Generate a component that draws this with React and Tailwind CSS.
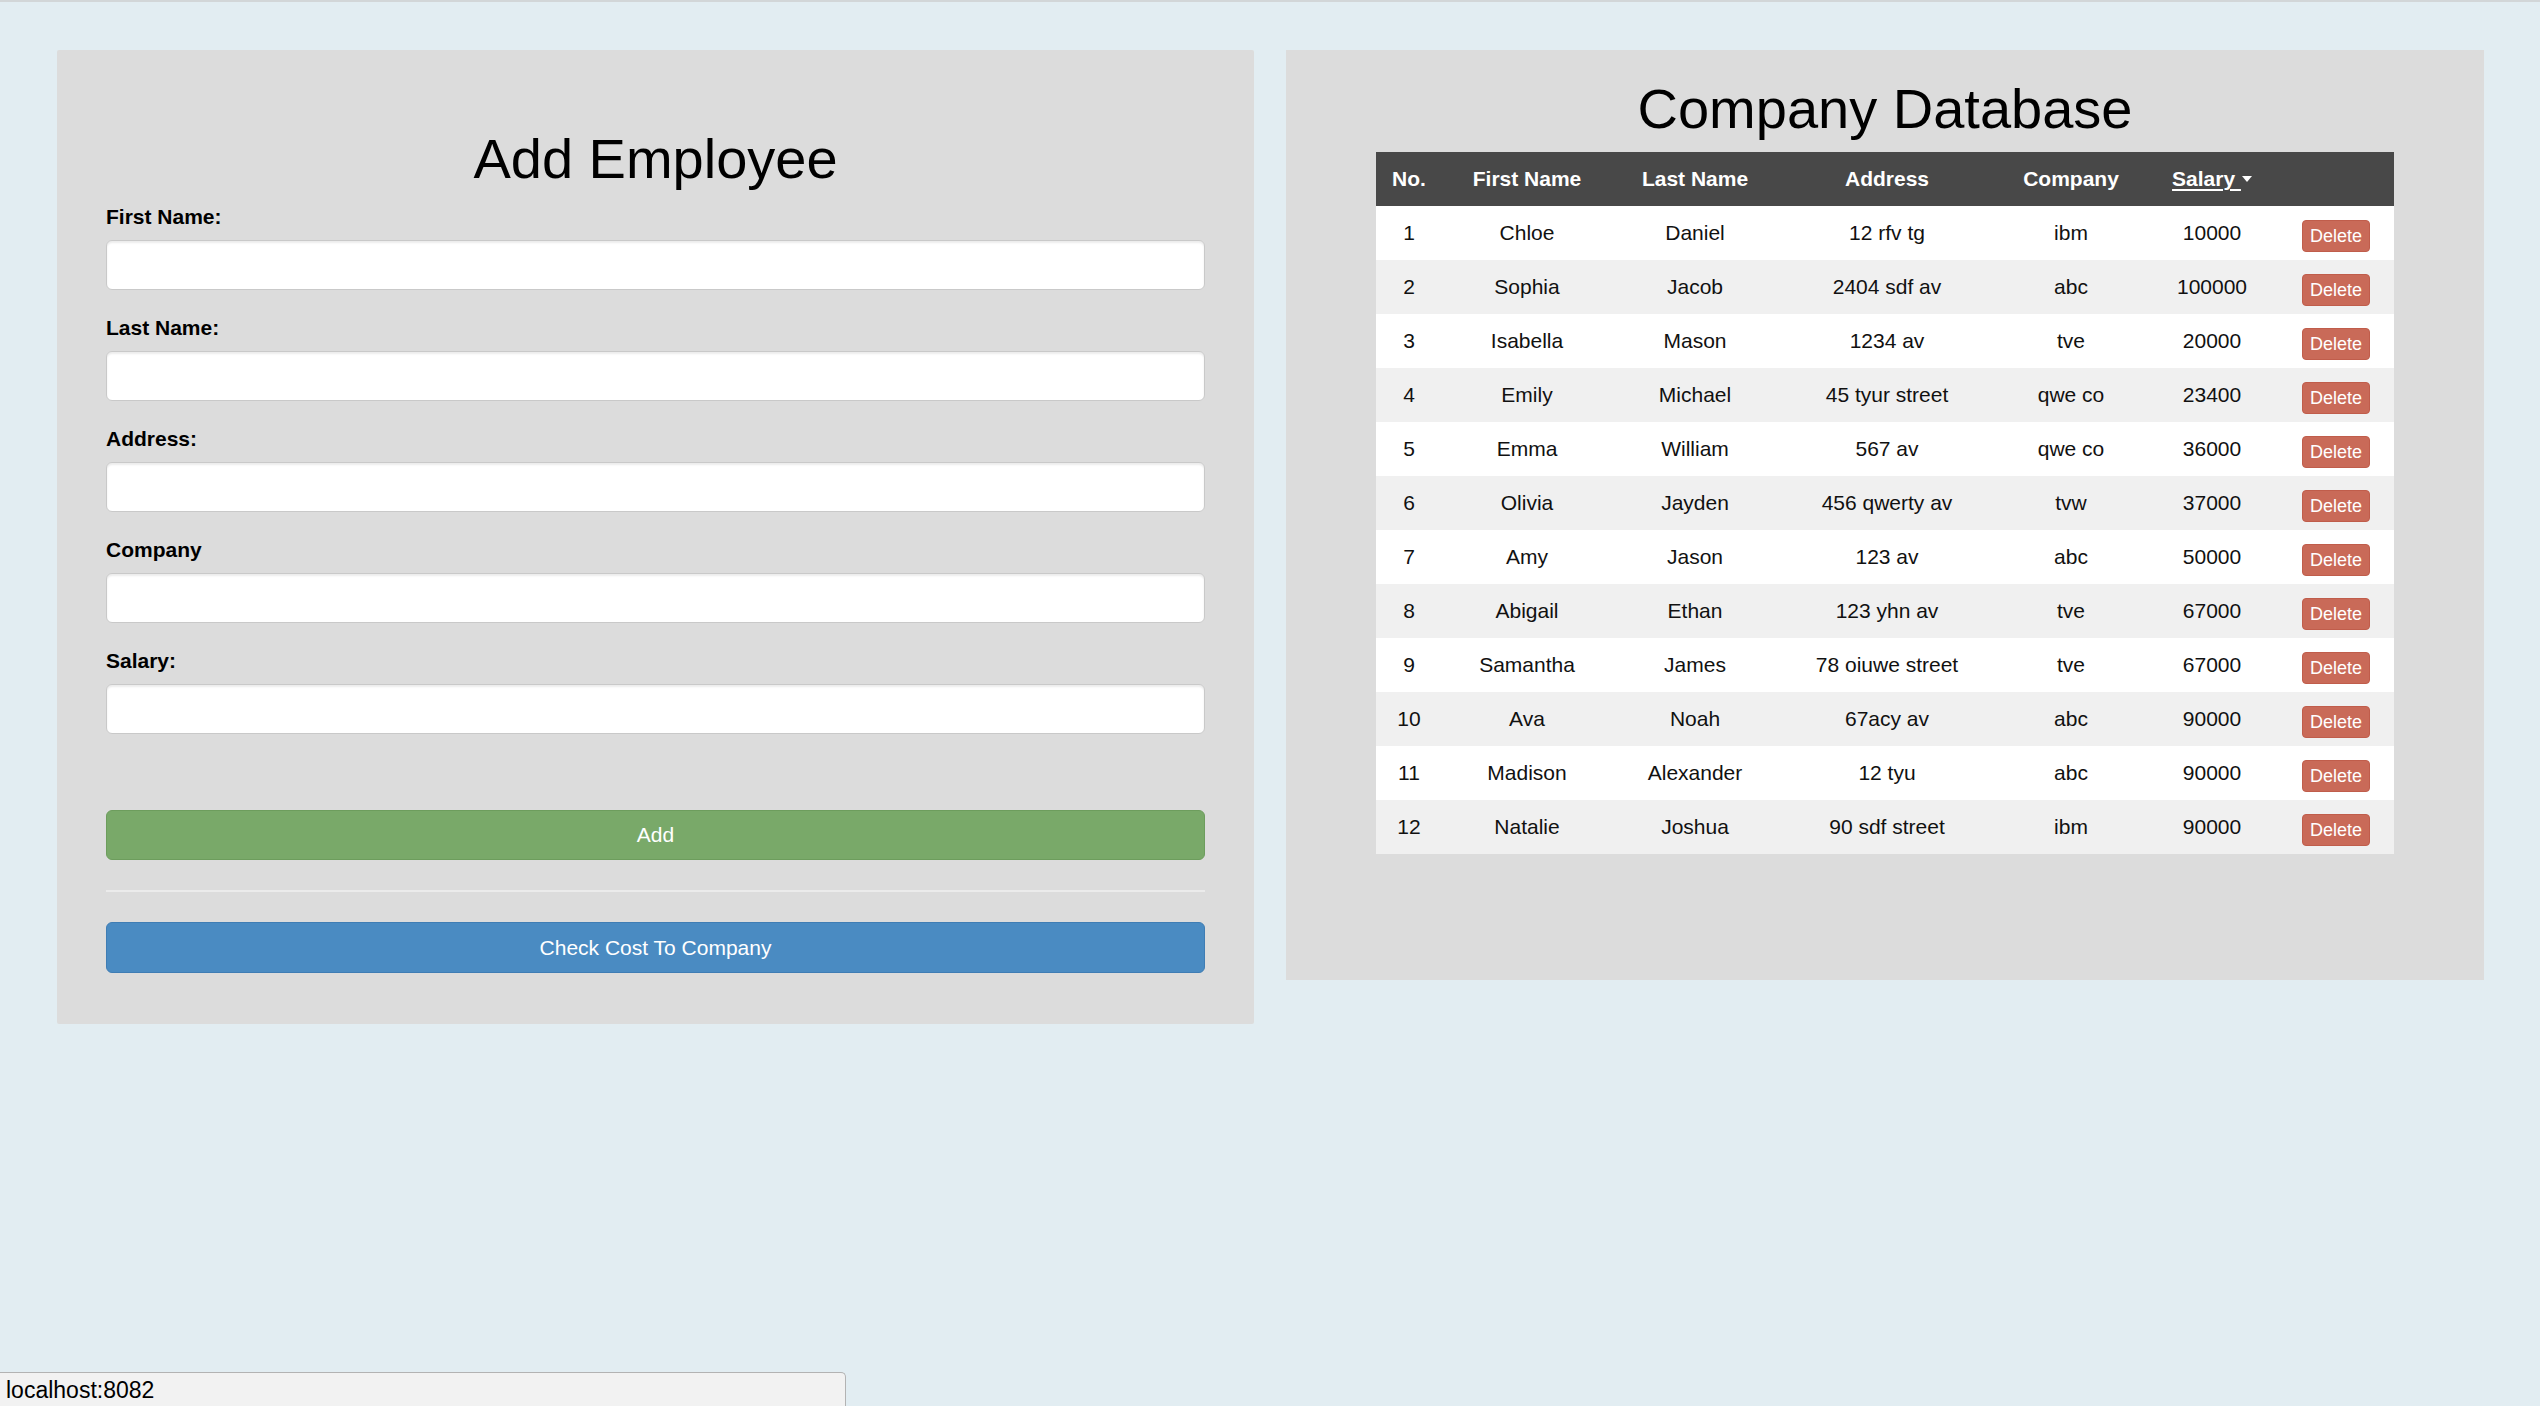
import { useState } from 'react'

const initialEmployees = [
  { first: 'Chloe', last: 'Daniel', address: '12 rfv tg', company: 'ibm', salary: 10000 },
  { first: 'Sophia', last: 'Jacob', address: '2404 sdf av', company: 'abc', salary: 100000 },
  { first: 'Isabella', last: 'Mason', address: '1234 av', company: 'tve', salary: 20000 },
  { first: 'Emily', last: 'Michael', address: '45 tyur street', company: 'qwe co', salary: 23400 },
  { first: 'Emma', last: 'William', address: '567 av', company: 'qwe co', salary: 36000 },
  { first: 'Olivia', last: 'Jayden', address: '456 qwerty av', company: 'tvw', salary: 37000 },
  { first: 'Amy', last: 'Jason', address: '123 av', company: 'abc', salary: 50000 },
  { first: 'Abigail', last: 'Ethan', address: '123 yhn av', company: 'tve', salary: 67000 },
  { first: 'Samantha', last: 'James', address: '78 oiuwe street', company: 'tve', salary: 67000 },
  { first: 'Ava', last: 'Noah', address: '67acy av', company: 'abc', salary: 90000 },
  { first: 'Madison', last: 'Alexander', address: '12 tyu', company: 'abc', salary: 90000 },
  { first: 'Natalie', last: 'Joshua', address: '90 sdf street', company: 'ibm', salary: 90000 },
]

const fields = [
  { key: 'first', label: 'First Name:' },
  { key: 'last', label: 'Last Name:' },
  { key: 'address', label: 'Address:' },
  { key: 'company', label: 'Company' },
  { key: 'salary', label: 'Salary:' },
]

function AddEmployee({ onAdd }) {
  const [form, setForm] = useState({ first: '', last: '', address: '', company: '', salary: '' })

  const handleAdd = () => {
    if (!form.first.trim()) return
    onAdd({ ...form, salary: Number(form.salary) || 0 })
    setForm({ first: '', last: '', address: '', company: '', salary: '' })
  }

  return (
    <div className="w-[1197px] shrink-0 bg-[#dcdcdc] px-[49px] pt-[78px] pb-[51px] rounded-[2px]">
      <h1 className="text-[56px] leading-[62px] text-center text-black mb-[12px]">Add Employee</h1>
      {fields.map((f) => (
        <div key={f.key} className="mb-[23px]">
          <label className="block text-[21px] leading-[30px] font-bold text-black mb-[8px]">{f.label}</label>
          <input
            value={form[f.key]}
            onChange={(e) => setForm({ ...form, [f.key]: e.target.value })}
            className="block w-full h-[50px] bg-white border border-[#c9c9c9] rounded-[6px] shadow-[inset_0_2px_2px_rgba(0,0,0,0.08)] px-[18px] text-[21px] outline-none"
          />
        </div>
      ))}
      <button
        onClick={handleAdd}
        className="block w-full h-[50px] mt-[76px] bg-[#79a969] border border-[#6d9d5d] rounded-[6px] text-white text-[21px]"
      >
        Add
      </button>
      <div className="h-[2px] bg-[#ebebeb] mt-[30px]" />
      <button className="block w-full h-[51px] mt-[30px] bg-[#4a8bc2] border border-[#3f7db4] rounded-[6px] text-white text-[21px]">
        Check Cost To Company
      </button>
    </div>
  )
}

function CompanyDatabase({ employees, onDelete }) {
  return (
    <div className="w-[1198px] h-[930px] shrink-0 bg-[#dcdcdc] px-[90px] pt-[28px]">
      <h1 className="text-[56px] leading-[62px] text-center text-black mb-[12px]">Company Database</h1>
      <table className="w-[1018px] table-fixed border-collapse text-[21px] text-center">
        <colgroup>
          <col className="w-[66px]" />
          <col className="w-[170px]" />
          <col className="w-[166px]" />
          <col className="w-[218px]" />
          <col className="w-[150px]" />
          <col className="w-[132px]" />
          <col className="w-[116px]" />
        </colgroup>
        <thead>
          <tr className="bg-[#484848] text-white font-bold h-[54px]">
            <th className="p-0">No.</th>
            <th className="p-0">First Name</th>
            <th className="p-0">Last Name</th>
            <th className="p-0">Address</th>
            <th className="p-0">Company</th>
            <th className="p-0">
              <span className="underline underline-offset-[3px] decoration-[2px]">Salary </span>
              <span className="inline-block align-middle ml-[1px] mb-[4px] w-0 h-0 border-l-[5px] border-r-[5px] border-t-[6px] border-l-transparent border-r-transparent border-t-white" />
            </th>
            <th className="p-0" />
          </tr>
        </thead>
        <tbody>
          {employees.map((e, i) => (
            <tr key={i} className={`h-[54px] text-[#111] ${i % 2 === 1 ? 'bg-[#f0f0f0]' : 'bg-white'}`}>
              <td className="p-0">{i + 1}</td>
              <td className="p-0">{e.first}</td>
              <td className="p-0">{e.last}</td>
              <td className="p-0">{e.address}</td>
              <td className="p-0">{e.company}</td>
              <td className="p-0">{e.salary}</td>
              <td className="p-0">
                <div className="flex justify-center items-center pt-[6px]">
                  <button
                    onClick={() => onDelete(i)}
                    className="w-[68px] h-[32px] bg-[#c96a58] border border-[#c05d4b] rounded-[4px] text-white text-[18px] leading-none"
                  >
                    Delete
                  </button>
                </div>
              </td>
            </tr>
          ))}
        </tbody>
      </table>
    </div>
  )
}

export default function App() {
  const [employees, setEmployees] = useState(initialEmployees)

  return (
    <div className="relative h-[1406px] overflow-hidden bg-[#e2edf2] border-t-2 border-[#d2d6d8] font-['Liberation_Sans',Arial,sans-serif]">
      <div className="flex items-start gap-[32px] px-[57px] pt-[48px]">
        <AddEmployee onAdd={(emp) => setEmployees([...employees, emp])} />
        <CompanyDatabase employees={employees} onDelete={(idx) => setEmployees(employees.filter((_, j) => j !== idx))} />
      </div>
      <div className="absolute left-0 bottom-0 w-[846px] h-[34px] bg-[#f2f2f2] border-t border-r border-[#b3b3b3] rounded-tr-[5px] pl-[6px] text-[23px] leading-[34px] text-black">
        localhost:8082
      </div>
    </div>
  )
}
